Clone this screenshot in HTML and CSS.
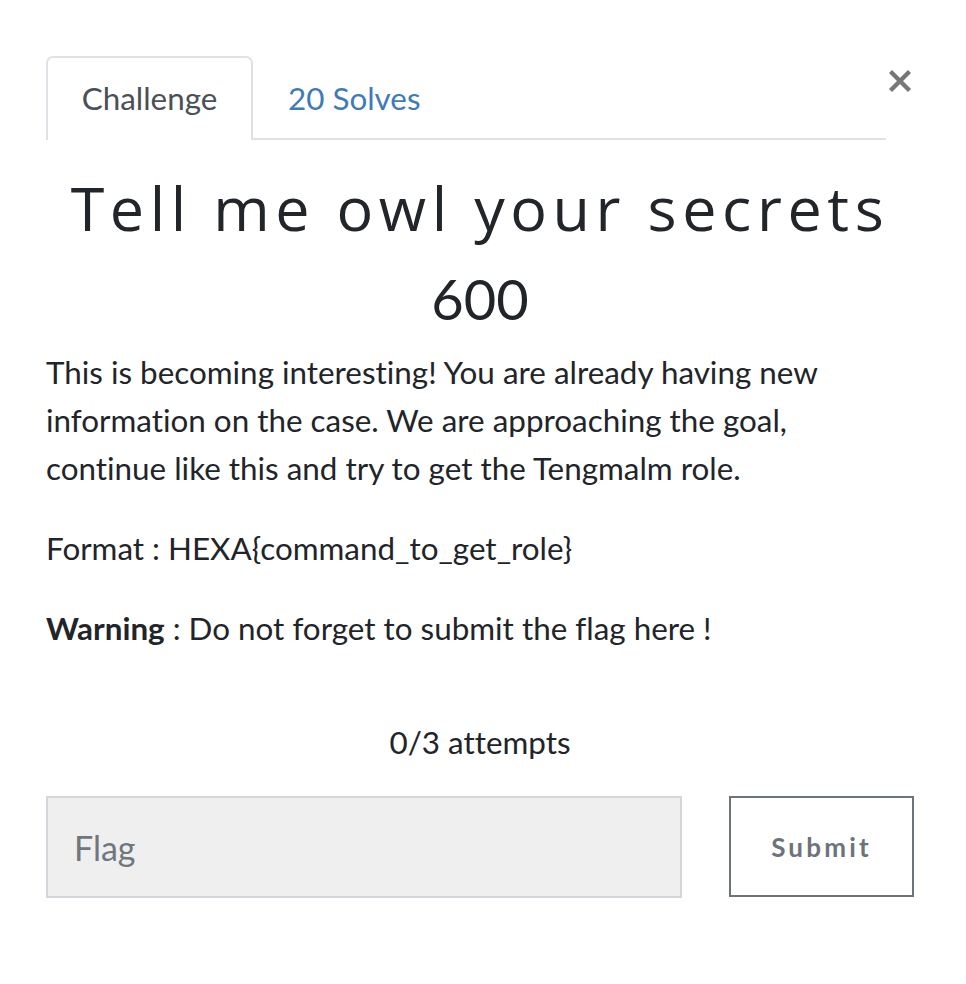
FILE: index.html
```html
<!DOCTYPE html>
<html lang="en">
<head>
<meta charset="utf-8">
<title>Challenge</title>
<link rel="stylesheet" href="styles.css">
</head>
<body>
<div class="modal">
  <button class="close" aria-label="Close">
    <svg width="24" height="24" viewBox="0 0 24 24"><path d="M2.5 2.5 L21.5 21.5 M21.5 2.5 L2.5 21.5" stroke="#777" stroke-width="4.4" stroke-linecap="butt" fill="none"/></svg>
  </button>
  <ul class="tabs">
    <li class="tab active">Challenge</li>
    <li class="tab link">20 Solves</li>
  </ul>
  <h1 class="title">Tell me owl your secrets</h1>
  <h3 class="value">600</h3>
  <div class="desc">
    <p>This is becoming interesting! You are already having new information on the case. We are approaching the goal, continue like this and try to get the Tengmalm role.</p>
    <p>Format : HEXA{command_to_get_role}</p>
    <p><strong>Warning</strong> : Do not forget to submit the flag here !</p>
  </div>
  <p class="attempts">0/3 attempts</p>
  <div class="submit-row">
    <input class="flag" type="text" placeholder="Flag">
    <button class="submit">Submit</button>
  </div>
</div>
</body>
</html>
```
FILE: styles.css
```css
html, body {
  margin: 0;
  padding: 0;
  background: #fff;
}
body {
  font-family: Lato, "Liberation Sans", sans-serif;
  color: #212529;
  font-size: 31.4px;
  line-height: 48px;
  font-variant-ligatures: no-common-ligatures;
}
.modal {
  position: relative;
  width: 868px;
  margin-left: 46px;
  padding-top: 56px;
}
.close {
  position: absolute;
  top: 69px;
  right: 2px;
  width: 24px;
  height: 24px;
  padding: 0;
  border: 0;
  background: none;
}
.close svg { display: block; }
.tabs {
  list-style: none;
  margin: 0 28px 0 0;
  padding: 0;
  display: flex;
  border-bottom: 2px solid #dee2e6;
}
.tab {
  box-sizing: border-box;
  height: 84px;
  padding: 18px 33px 0;
  line-height: 44px;
  border: 2px solid transparent;
  border-bottom: 0;
  border-radius: 7px 7px 0 0;
  margin-bottom: -2px;
}
.tab.active {
  color: #495057;
  background: #fff;
  border-color: #dee2e6;
  width: 207px;
  text-align: center;
  padding-left: 0;
  padding-right: 0;
}
.tab.link {
  color: #3e7bb8;
  padding-left: 33px;
}
.title {
  margin: 30px 0 0;
  text-align: center;
  font-family: "Open Sans", Lato, sans-serif;
  font-weight: 400;
  font-size: 61px;
  line-height: 76px;
  letter-spacing: 5.6px;
  color: #222529;
}
.value {
  margin: 20px 0 0;
  text-align: center;
  font-weight: 400;
  font-size: 56px;
  line-height: 66px;
}
.desc {
  margin-top: 16px;
}
.desc p {
  margin: 0 0 32px;
}
.desc p:last-child { margin-bottom: 0; }
.desc strong { font-weight: 700; }
.attempts {
  margin: 66px 0 0;
  text-align: center;
}
.submit-row {
  margin-top: 30px;
  display: flex;
  gap: 47px;
}
.flag {
  box-sizing: border-box;
  width: 636px;
  height: 102px;
  padding: 0 26px;
  border: 2px solid #d3d7db;
  background: #efefef;
  font-family: Lato, "Liberation Sans", sans-serif;
  font-size: 34px;
  color: #495057;
  outline: none;
  border-radius: 0;
}
.flag::placeholder { color: #6f767d; }
.submit {
  box-sizing: border-box;
  width: 185px;
  height: 101px;
  border: 2px solid #6c737a;
  background: #fff;
  color: #6c737a;
  font-family: Lato, "Liberation Sans", sans-serif;
  font-weight: 700;
  font-size: 26px;
  letter-spacing: 3.2px;
  border-radius: 0;
  padding: 0;
}
```
